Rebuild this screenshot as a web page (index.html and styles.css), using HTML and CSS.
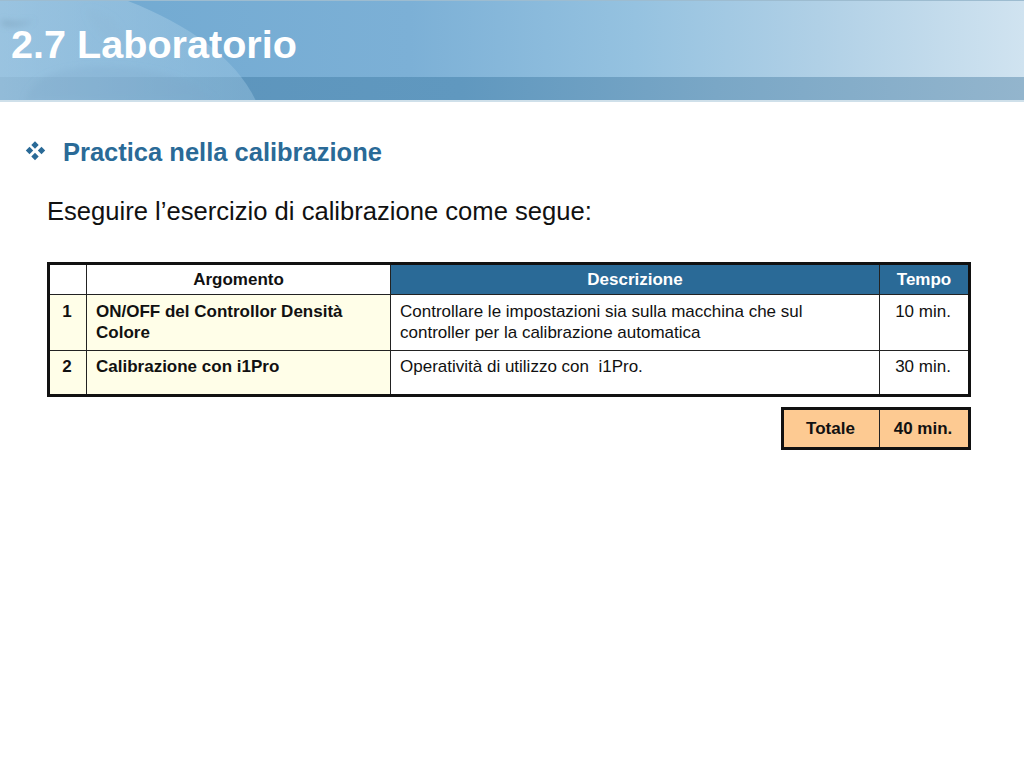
FILE: index.html
```html
<!DOCTYPE html>
<html lang="it">
<head>
<meta charset="utf-8">
<title>2.7 Laboratorio</title>
<link rel="stylesheet" href="styles.css">
</head>
<body>
<header class="banner">
  <svg class="globe" width="270" height="100" viewBox="0 0 270 100" aria-hidden="true">
    <defs>
      <linearGradient id="g" x1="0" y1="0" x2="1" y2="0">
        <stop offset="0" stop-color="#b4d4ea" stop-opacity=".62"/>
        <stop offset="1" stop-color="#9cc6e2" stop-opacity=".42"/>
      </linearGradient>
      <filter id="b"><feGaussianBlur stdDeviation="3"/></filter>
    </defs>
    <path d="M0 0H128C190 24 236 58 256 100H0Z" fill="url(#g)"/>
    <g filter="url(#b)">
      <path d="M25 100C32 78 52 68 90 66C150 64 190 76 215 100Z" fill="#7ea8c8" opacity=".28"/>
      <path d="M86 8C110 10 130 28 120 48C105 40 90 26 86 8Z" fill="#8fb4d0" opacity=".22"/>
      <path d="M2 19C12 22 26 22 34 19C26 25 10 26 2 24Z" fill="#6f93ae" opacity=".5"/>
    </g>
  </svg>
  <div class="banner-top"><h1 class="title">2.7 Laboratorio</h1></div>
  <div class="banner-band"></div>
</header>
<main class="content">
  <h2 class="section">
    <svg class="bullet" width="22" height="22" viewBox="0 0 22 22" aria-hidden="true">
      <path d="M10 .3l3.7 3.7-3.7 3.7-3.7-3.7zM4.5 5.8l3.7 3.7-3.7 3.7L.8 9.500zM16.500 5.800l3.700 3.700-3.700 3.700-3.700-3.700zM10 11.800l3.700 3.700-3.700 3.700-3.700-3.700z"/>
    </svg>
    <span>Practica nella calibrazione</span>
  </h2>
  <p class="intro">Eseguire l’esercizio di calibrazione come segue:</p>
  <table class="grid">
    <colgroup>
      <col class="c-num"><col class="c-arg"><col class="c-desc"><col class="c-time">
    </colgroup>
    <tr class="head">
      <th class="blank"></th>
      <th class="blank">Argomento</th>
      <th class="blue">Descrizione</th>
      <th class="blue">Tempo</th>
    </tr>
    <tr class="row-a">
      <td class="cream num">1</td>
      <td class="cream strong">ON/OFF del Controllor Densità Colore</td>
      <td>Controllare le impostazioni sia sulla macchina che sul controller per la calibrazione automatica</td>
      <td class="mid">10 min.</td>
    </tr>
    <tr class="row-b">
      <td class="cream num">2</td>
      <td class="cream strong">Calibrazione con i1Pro</td>
      <td>Operatività di utilizzo con&nbsp; i1Pro.</td>
      <td class="mid">30 min.</td>
    </tr>
  </table>
  <table class="total">
    <tr>
      <td class="t-label">Totale</td>
      <td class="t-value">40 min.</td>
    </tr>
  </table>
</main>
</body>
</html>
```
FILE: styles.css
```css
html, body { margin: 0; padding: 0; background: #fff; }
body { font-family: "Liberation Sans", Arial, sans-serif; color: #111; }

.banner {
  position: relative;
  height: 102px;
  overflow: hidden;
  display: flex;
  flex-direction: column;
  border-top: 1px solid #9dbcd0;
  box-sizing: border-box;
  border-bottom: 2px solid #cfe0ea;
}
.globe { position: absolute; left: 0; top: 0; z-index: 1; }
.banner-top {
  height: 76px;
  background: linear-gradient(90deg, #6fa8d0 0%, #7cb0d6 40%, #95c2e0 62%, #b0d0e6 80%, #d0e3f0 100%);
  display: flex;
  align-items: center;
  flex: none;
}
.banner-band {
  height: 23px;
  flex: none;
  background: linear-gradient(90deg, #5b93bb 0%, #6098bf 45%, #7aa7c6 70%, #93b5cd 100%);
  position: relative;
}
.title {
  position: relative;
  z-index: 2;
  margin: 10px 0 0 11px;
  font-size: 39.6px;
  line-height: 40px;
  font-weight: bold;
  color: #fff;
}
.content { padding: 0 53px 0 47px; }
.section {
  display: flex;
  align-items: center;
  margin: 36px 0 0 -22px;
  font-size: 25.5px;
  line-height: 28px;
  font-weight: bold;
  color: #2a6a97;
}
.bullet { fill: #2a6a97; margin-right: 16px; flex: none; }
.intro { margin: 31px 0 0; font-size: 25.6px; line-height: 28px; color: #111; }

table { border-collapse: collapse; table-layout: fixed; font-size: 17px; line-height: 21px; }
.grid { width: 921px; margin-top: 37px; border: 3px solid #111; }
.c-num { width: 38px; }
.c-arg { width: 304px; }
.c-desc { width: 489px; }
.c-time { width: 90px; }
th, td { border: 1px solid #222; padding: 5px 9px; vertical-align: top; }
.head th { height: 31px; box-sizing: border-box; font-weight: bold; text-align: center; vertical-align: middle; padding: 0 9px; }
.blue { background: #2a6a97; color: #fff; }
.cream { background: #fffee8; }
.strong { font-weight: bold; }
.num { font-weight: bold; text-align: center; padding-left: 0; padding-right: 2px; }
.mid { text-align: center; padding-left: 0; padding-right: 2px; }
.row-a td { height: 56px; box-sizing: border-box; padding-top: 6px; }
.row-b td { height: 45px; box-sizing: border-box; }

.total {
  width: 190px;
  margin: 10px 0 0 auto;
  border: 3px solid #111;
  background: #fdca92;
  font-weight: bold;
}
.total td { height: 40px; box-sizing: border-box; text-align: center; vertical-align: middle; padding: 0 2px 0 0; }
.t-label { width: 97px; }
```
